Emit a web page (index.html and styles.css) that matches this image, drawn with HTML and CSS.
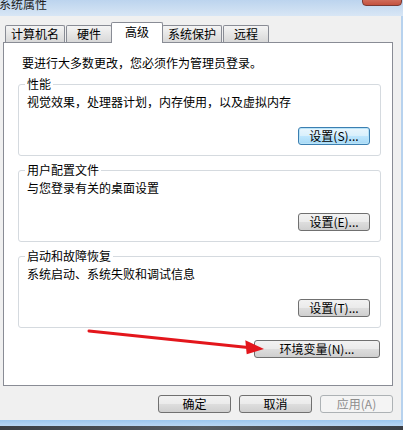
FILE: index.html
```html
<!DOCTYPE html>
<html lang="zh-CN">
<head>
    <meta charset="UTF-8">
    <title>系统属性</title>
    <link rel="stylesheet" href="styles.css">
</head>
<body>

    <div class="window">
        <div class="titlebar">
            <span class="title">系统属性</span>
            <div class="close"></div>
        </div>

        <div class="main">
            <div class="dialog">
                <div class="tabs">
                    <div class="tab">计算机名</div>
                    <div class="tab">硬件</div>
                    <div class="tab active">高级</div>
                    <div class="tab">系统保护</div>
                    <div class="tab">远程</div>
                </div>

                <div class="panel">
                    <div class="note">要进行大多数更改，您必须作为管理员登录。</div>

                    <div class="group">
                        <div class="group-title">性能</div>
                        <div class="group-text">视觉效果，处理器计划，内存使用，以及虚拟内存</div>
                        <div class="group-actions">
                            <button class="btn focus">设置(S)...</button>
                        </div>
                    </div>

                    <div class="group">
                        <div class="group-title">用户配置文件</div>
                        <div class="group-text">与您登录有关的桌面设置</div>
                        <div class="group-actions">
                            <button class="btn">设置(E)...</button>
                        </div>
                    </div>

                    <div class="group">
                        <div class="group-title">启动和故障恢复</div>
                        <div class="group-text">系统启动、系统失败和调试信息</div>
                        <div class="group-actions">
                            <button class="btn">设置(T)...</button>
                        </div>
                    </div>

                    <div class="env-row">
                        <button class="btn env">环境变量(N)...</button>
                    </div>
                </div>

                <div class="footer">
                    <button class="btn wide">确定</button>
                    <button class="btn wide">取消</button>
                    <button class="btn wide" disabled>应用(A)</button>
                </div>
            </div>
            <div class="frame-right"></div>
        </div>

        <div class="frame-bottom"></div>
        <div class="taskbar"></div>

        <svg class="arrow" width="403" height="430" viewBox="0 0 403 430">
            <line x1="89" y1="331" x2="248" y2="347.4" stroke="#e3161c" stroke-width="3" stroke-linecap="round"/>
            <polygon points="264,349 245.3,340.3 246.7,354.3" fill="#e3161c"/>
        </svg>
    </div>

</body>
</html>
```

FILE: styles.css
```css
body {
    margin: 0;
    font-family: "Noto Sans CJK SC", "Liberation Sans", sans-serif;
    font-size: 12px;
    color: #000;
    background: #2b2f33;
}

.window {
    position: relative;
    width: 403px;
    height: 430px;
    overflow: hidden;
    display: flex;
    flex-direction: column;
}

.titlebar {
    position: relative;
    height: 16px;
    background: linear-gradient(#bcd4ee, #d8e6f5);
    overflow: hidden;
}

.title {
    display: block;
    margin: -3px 0 0 -1px;
    line-height: 14px;
    font-size: 12px;
    color: #1e1e1e;
}

.close {
    position: absolute;
    left: 362px;
    top: -12px;
    width: 38px;
    height: 16px;
    border: 1px solid #7a3a34;
    border-radius: 4px;
    background: linear-gradient(#e8a596, #c4523f);
}

.main {
    display: flex;
    height: 404px;
}

.dialog {
    width: 401px;
    background: #f0f0f0;
    padding-top: 6px;
    box-sizing: border-box;
}

.frame-right {
    width: 2px;
    background: #b7d2ee;
}

.tabs {
    display: flex;
    align-items: flex-end;
    height: 20px;
    padding-left: 5px;
}

.tab {
    box-sizing: border-box;
    height: 17px;
    min-width: 46px;
    padding: 0 5px;
    margin-right: 1px;
    border: 1px solid #898c95;
    border-bottom: none;
    border-radius: 2px 2px 0 0;
    background: linear-gradient(#f4f4f4, #e6e6e6 50%, #d8d8d8);
    text-align: center;
    line-height: 16px;
}

.tab.active {
    position: relative;
    z-index: 1;
    height: 21px;
    min-width: 52px;
    margin: 0 0 -1px -2px;
    background: #fff;
    line-height: 18px;
}

.tab.active + .tab {
    margin-left: -1px;
}

.panel {
    box-sizing: border-box;
    width: 390px;
    height: 344px;
    margin-left: 3px;
    padding: 12px 11px 0 14px;
    background: #fff;
    border: 1px solid #898c95;
}

.note {
    line-height: 16px;
    padding-left: 4px;
    margin-bottom: 13px;
}

.group {
    border: 1px solid #d5dadf;
    border-radius: 3px;
    padding: 0 10px 10px 8px;
    margin-bottom: 14px;
}

.group-title {
    width: fit-content;
    margin: -9px 0 0 -2px;
    padding: 0 2px;
    background: #fff;
    line-height: 16px;
}

.group-text {
    margin-top: 2px;
    line-height: 16px;
}

.group-actions {
    display: flex;
    justify-content: flex-end;
    margin-top: 17px;
}

.btn {
    box-sizing: border-box;
    height: 18px;
    width: 72px;
    padding: 0;
    font-family: inherit;
    font-size: 12px;
    line-height: 16px;
    color: #000;
    border: 1px solid #707070;
    border-radius: 3px;
    background: linear-gradient(#f2f2f2, #ebebeb 48%, #dddddd 52%, #cfcfcf);
}

.btn.focus {
    border-color: #3c7fb1;
    box-shadow: inset 0 0 0 1px #b8e3f8;
    background: linear-gradient(#eaf6fd, #d9f0fc 48%, #bee6fd 52%, #a7d9f5);
}

.btn:disabled {
    color: #8d8d8d;
    border-color: #adb2b5;
    background: #f4f4f4;
}

.env-row {
    display: flex;
    justify-content: flex-end;
    margin-top: -2px;
    padding-right: 1px;
}

.btn.env {
    width: 126px;
}

.footer {
    display: flex;
    justify-content: flex-end;
    gap: 8px;
    padding-right: 8px;
    margin-top: 9px;
}

.btn.wide {
    width: 73px;
}

.frame-bottom {
    height: 6px;
    background: linear-gradient(#9cc6ee, #b9d6f3);
}

.taskbar {
    flex: 1;
    background: linear-gradient(90deg, #3a3e44, #555b62 50%, #3a3e44);
}

.arrow {
    position: absolute;
    left: 0;
    top: 0;
    pointer-events: none;
}
```
